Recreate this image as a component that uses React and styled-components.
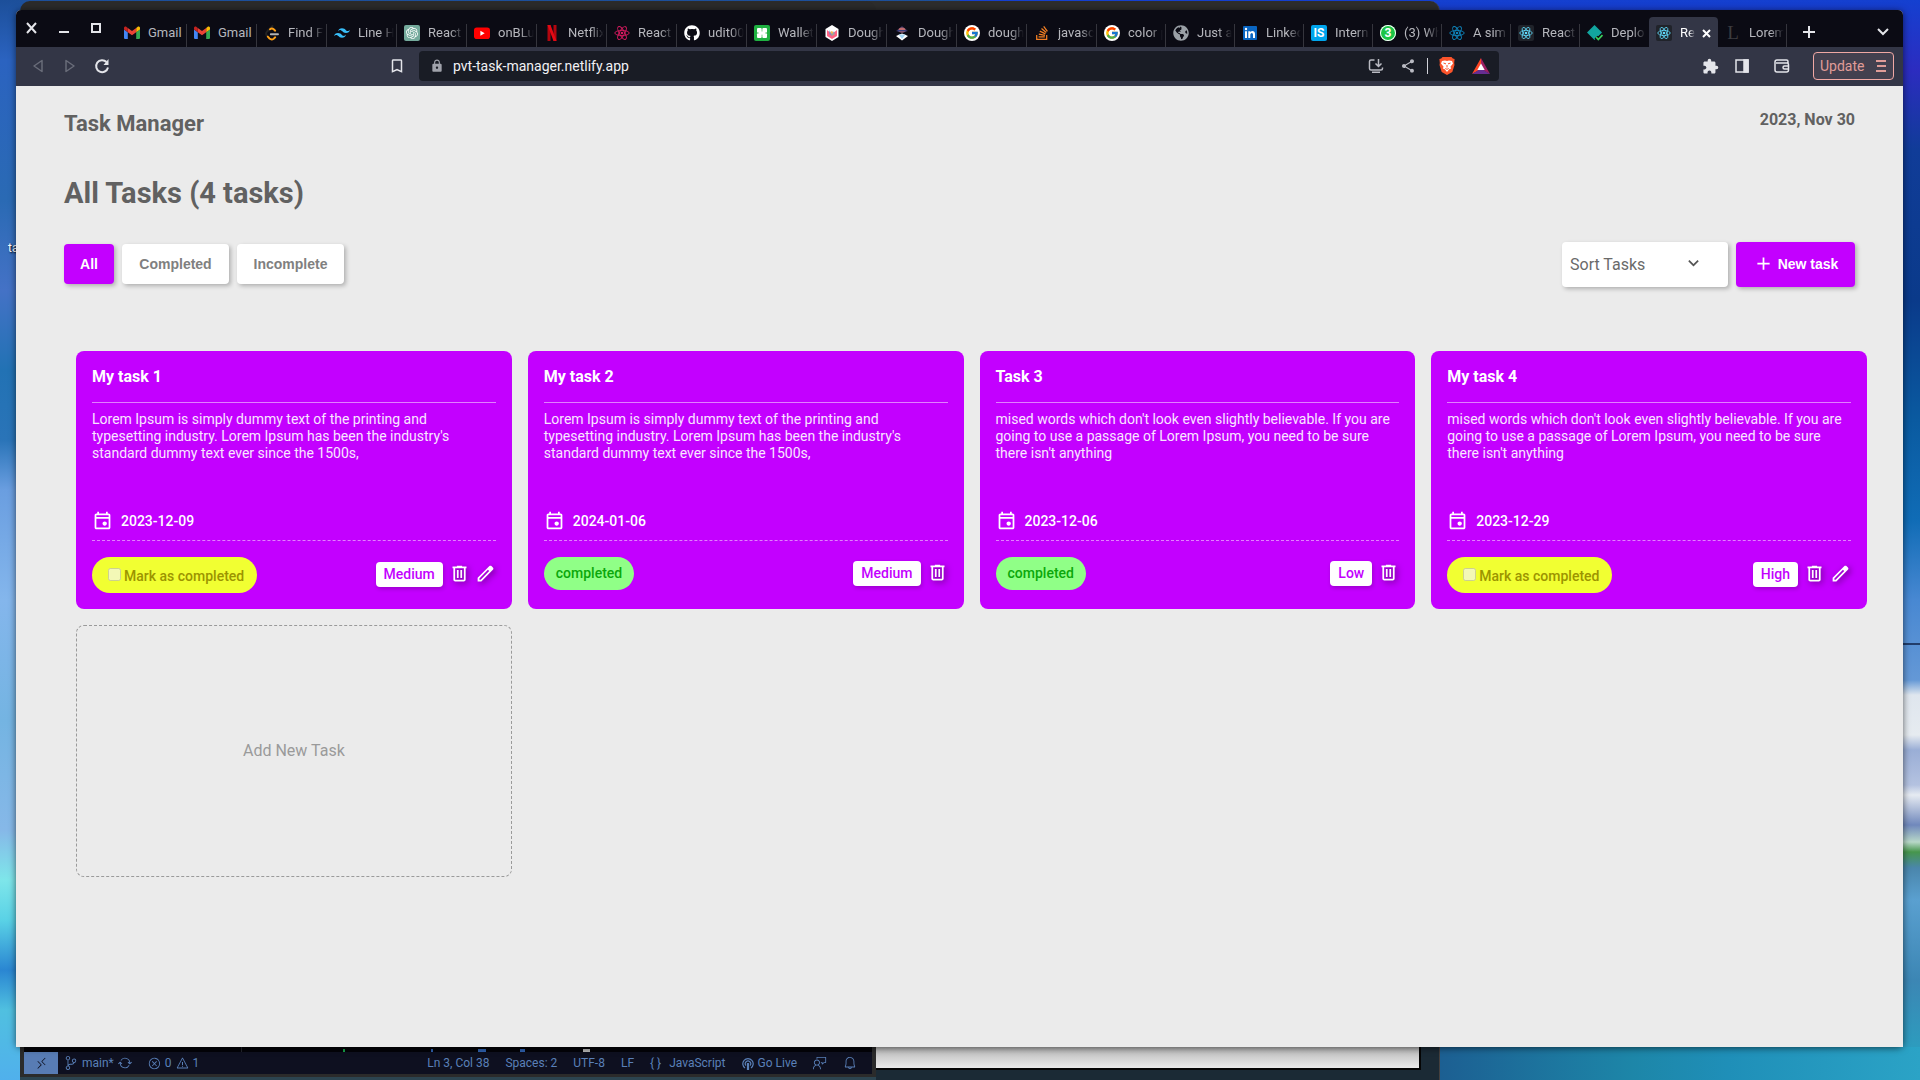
import React from "react";
import styled, { createGlobalStyle, css } from "styled-components";
import { FcGoogle } from "react-icons/fc";
import { FaGithub, FaStackOverflow, FaGlobeAmericas } from "react-icons/fa";
import { MdExtension, MdShare, MdLock, MdBookmarkBorder } from "react-icons/md";
import {
  VscRemote,
  VscSourceControl,
  VscSync,
  VscError,
  VscWarning,
  VscBell,
  VscFeedback,
} from "react-icons/vsc";
import { SiOpenai, SiTailwindcss } from "react-icons/si";

const GlobalStyle = createGlobalStyle`
  * { box-sizing: border-box; }
  body {
    margin: 0;
    font-family: Roboto, "Liberation Sans", sans-serif;
  }
  button, select, input { font: inherit; }
  h1, h2, h3, p { margin: 0; }
`;

/* ---------- desktop ---------- */

const Desktop = styled.div`
  position: relative;
  height: 100vh;
  overflow: hidden;
  background:
    linear-gradient(90deg, rgba(0, 0, 0, 0) 0 98%, rgba(20, 40, 80, 0.8) 98%) 0 643px / 100% 2px no-repeat,
    linear-gradient(90deg, #1c5f92, #1d86a8 40%, #1f8fb8 60%, #2ba3c6) right bottom / 480px 33px no-repeat,
    linear-gradient(180deg, #1440d0 0, #2c2cc0 70px, #103c98 150px, #0a3a8a 300px, #0a5aa0 420px,
      #106cb6 520px, #4888d2 600px, #6498d6 680px, #dfe6ee 695px, #e6ebf0 735px, #9aaed6 750px,
      #b4c2e0 785px, #e6ebf2 795px, #7088bc 825px, #b8d8c8 842px, #46964c 852px, #4a86ac 868px,
      #5aa0d0 900px, #3c86b4 980px, #2aa0c0 1060px) right top / 960px 100% no-repeat,
    linear-gradient(180deg, #1c4f9a 0, #2b63c0 60px, #2a6ab4 200px, #4472c6 290px, #2272b4 370px,
      #2a74b8 440px, #6a9ee0 490px, #84b6ec 600px, #74b4e2 720px, #86b8e8 830px, #7ee6ea 880px,
      #5ad2e6 920px, #2a86d2 970px, #50c0e0 1010px, #50b0ec 1080px);
`;

const DesktopLabel = styled.span`
  position: absolute;
  left: 8px;
  top: 240px;
  font-size: 12px;
  line-height: 16px;
  color: #fff;
  text-shadow: 1px 1px 2px #000;
`;

const PreviewWindow = styled.div`
  position: absolute;
  left: 500px;
  top: 1px;
  bottom: 0;
  width: 940px;
  display: flex;
  flex-direction: column;
  background: linear-gradient(180deg, #2d2d2d 0, #2d2d2d 90%, #1b2a35 96%);
  border-radius: 0 10px 0 0;
  border-right: 1px solid #45403e;
  padding: 26px 18px 10px 0;
`;

const PreviewPage = styled.div`
  flex: 1;
  background: linear-gradient(0deg, #eaeaea 0, #b4b4b4 22px);
  border-bottom: 2px solid #050505;
  border-right: 2px solid #050505;
`;

const EditorWindow = styled.div`
  position: absolute;
  left: 20px;
  top: 1px;
  bottom: 3px;
  width: 856px;
  display: flex;
  flex-direction: column;
  background: #2b2b2b;
  border-radius: 10px 10px 0 0;
  padding: 26px 4px 3px;
  box-shadow: 0 4px 0 #2c4450;
`;

const CodePane = styled.div`
  flex: 1;
  background:
    linear-gradient(#16a34a, #16a34a) 319px 100% / 2px 3px no-repeat,
    linear-gradient(#2f62b0, #2f62b0) 407px 100% / 2px 3px no-repeat,
    linear-gradient(#2f62b0, #2f62b0) 454px 100% / 8px 3px no-repeat,
    linear-gradient(#2f62b0, #2f62b0) 496px 100% / 5px 3px no-repeat,
    linear-gradient(#b8b8b8, #b8b8b8) 559px 100% / 7px 3px no-repeat,
    linear-gradient(#24262e, #24262e) 217px 100% / 1px 8px no-repeat,
    #030308;
`;

const StatusBar = styled.footer`
  display: flex;
  align-items: center;
  justify-content: space-between;
  height: 22px;
  background: #0e1020;
  color: #5a80b8;
  font-size: 12px;
  line-height: 22px;
`;

const StatusGroup = styled.div`
  display: flex;
  align-items: center;
  gap: ${(p) => p.$gap}px;
  padding-right: ${(p) => p.$end || 0}px;
`;

const StatusItem = styled.span`
  display: flex;
  align-items: center;
  gap: ${(p) => p.$gap || 4}px;
  white-space: nowrap;
`;

const RemoteBadge = styled.span`
  display: grid;
  place-items: center;
  width: 34px;
  height: 22px;
  margin-right: -10px;
  background: #587cb4;
  color: #0e1020;
`;

/* ---------- browser chrome ---------- */

const Browser = styled.div`
  position: absolute;
  inset: 10px 17px 33px 16px;
  display: flex;
  flex-direction: column;
  border-radius: 5px 5px 0 0;
  overflow: hidden;
  background: #ebebeb;
`;

const BrowserShade = styled.div`
  position: absolute;
  inset: 10px 17px 33px 16px;
  border-radius: 5px;
  box-shadow: 0 1px 7px rgba(0, 0, 0, 0.6);
`;

const TitleBar = styled.div`
  display: flex;
  align-items: stretch;
  height: 37px;
  background: #0b0b14;
  color: #e8e8ec;
`;

const WindowControls = styled.div`
  display: flex;
  width: 101px;
  height: 36px;
`;

const ChromeButton = styled.button`
  display: grid;
  place-items: center;
  width: 32px;
  height: 100%;
  padding: 0;
  margin-left: ${(p) => p.$lead || 0}px;
  border: 0;
  background: none;
  color: ${(p) => (p.$dim ? "#696c79" : "#e4e5ea")};
`;

const Tab = styled.div`
  position: relative;
  display: flex;
  align-items: center;
  gap: 8px;
  width: 70px;
  height: 30px;
  align-self: flex-end;
  padding: 2px 3px 0 7px;
  font-size: 13px;
  line-height: 16px;
  color: #b6b7bd;

  &:nth-child(n + 16) { width: 69px; }

  &::after {
    content: "";
    position: absolute;
    right: 0;
    bottom: 0;
    width: 1px;
    height: 23px;
    background: #35353d;
  }

  ${(p) =>
    p.$active &&
    css`
      background: #333646;
      border-radius: 4px 4px 0 0;
      color: #fff;
      &::after { display: none; }
    `}
  ${(p) => p.$beforeActive && css`&::after { display: none; }`}
`;

const TabIcon = styled.span`
  display: grid;
  flex: none;
  width: 16px;
  height: 16px;
  svg { width: 16px; height: 16px; }
`;

const TabText = styled.span`
  flex: 1;
  min-width: 0;
  overflow: hidden;
  white-space: nowrap;
  mask-image: ${(p) =>
    p.$fade ? `linear-gradient(90deg, #000 calc(100% - ${p.$fade}px), transparent)` : "none"};
`;

const TabClose = styled.button`
  display: grid;
  flex: none;
  width: 10px;
  margin: 0 4px 0 -2px;
  padding: 0;
  border: 0;
  background: none;
  color: #fff;
  place-items: center;
`;

const TabTools = styled.div`
  display: flex;
  flex: 1;
  justify-content: space-between;
  padding: 7px 4px 0 6px;
`;

const Toolbar = styled.div`
  display: flex;
  align-items: center;
  height: 39px;
  padding-bottom: 1px;
  background: #333646;
`;

const NavSide = styled.div`
  display: flex;
  flex: 1;
  align-items: center;
  justify-content: space-between;
  height: 32px;
  padding: 0 6px;
`;

const ToolSide = styled.div`
  display: flex;
  flex: 1;
  align-items: center;
  justify-content: flex-end;
  height: 32px;
  padding: 0 9px 0 4px;
`;

const ButtonRow = styled.div`
  display: flex;
  align-items: center;
  height: 100%;
`;

const AddressBar = styled.div`
  display: flex;
  align-items: center;
  flex: 0 1 1080px;
  height: 30px;
  padding: 0 2px 0 11px;
  background: #191c25;
  border-radius: 4px;
  color: #a0a2ab;
`;

const AddressInput = styled.input`
  flex: 1;
  min-width: 0;
  height: 30px;
  padding: 0 0 0 9px;
  border: 0;
  outline: 0;
  background: none;
  color: #f1f1f4;
  font-size: 14px;
`;

const AddressDivider = styled.span`
  width: 1px;
  height: 16px;
  margin: 0 3px;
  background: #d0d1d8;
`;

const UpdateButton = styled.button`
  display: flex;
  align-items: center;
  justify-content: space-between;
  width: 81px;
  height: 28px;
  margin-left: 15px;
  padding: 0 7px 0 6px;
  border: 1px solid #f0a8a4;
  border-radius: 4px;
  background: #43404f;
  color: #e09c98;
  font-size: 14px;
`;

/* ---------- task page ---------- */

const Page = styled.main`
  flex: 1;
  padding-top: 24px;
  background: #ebebeb;
  color: #616161;
`;

const PageHeader = styled.header`
  display: flex;
  align-items: flex-start;
  justify-content: space-between;
  padding: 0 48px;
`;

const Brand = styled.h2`
  font-size: 22px;
  line-height: 28px;
  font-weight: 700;
`;

const Today = styled.time`
  font-size: 16px;
  line-height: 19px;
  font-weight: 700;
`;

const PageTitle = styled.h1`
  padding: 38px 48px 31px;
  font-size: 29px;
  line-height: 35px;
  font-weight: 700;
`;

const Controls = styled.div`
  display: flex;
  justify-content: space-between;
  padding: 0 48px;
`;

const Filters = styled.div`
  display: flex;
  gap: 8px;
  padding-top: 2px;
`;

const FilterButton = styled.button`
  height: 40px;
  min-width: ${(p) => (p.$active ? 50 : 107)}px;
  padding: 0 16px;
  border: 0;
  border-radius: 4px;
  background: ${(p) => (p.$active ? "#c300ff" : "#fff")};
  color: ${(p) => (p.$active ? "#fff" : "#808080")};
  font-family: "Liberation Sans", sans-serif;
  font-size: 14px;
  font-weight: 700;
  box-shadow: 2px 2px 4px rgba(0, 0, 0, 0.25);
`;

const Actions = styled.div`
  display: flex;
  gap: 8px;
`;

const SortBox = styled.label`
  position: relative;
  display: block;
  svg {
    position: absolute;
    top: 11px;
    right: 24px;
    color: #555;
    pointer-events: none;
  }
`;

const SortSelect = styled.select`
  appearance: none;
  width: 166px;
  height: 45px;
  padding: 0 8px;
  border: 0;
  border-radius: 4px;
  background: #fff;
  color: #6a6a6a;
  font-size: 16px;
  box-shadow: 2px 2px 4px rgba(0, 0, 0, 0.25);
`;

const NewTaskButton = styled.button`
  display: flex;
  align-items: center;
  justify-content: center;
  gap: 4px;
  width: 119px;
  height: 45px;
  padding: 0 0 2px;
  border: 0;
  border-radius: 4px;
  background: #c300ff;
  color: #fff;
  font-family: "Liberation Sans", sans-serif;
  font-size: 14px;
  font-weight: 700;
  box-shadow: 2px 2px 4px rgba(0, 0, 0, 0.25);
`;

const TaskGrid = styled.section`
  display: grid;
  grid-template-columns: repeat(4, 1fr);
  gap: 16px;
  padding: 64px 36px 0 60px;
`;

const Card = styled.article`
  padding: 16px;
  border-radius: 8px;
  background: #c300ff;
  color: #fff;
`;

const CardTitle = styled.h3`
  padding-bottom: 16px;
  border-bottom: 1px solid rgba(255, 255, 255, 0.5);
  font-size: 16px;
  line-height: 19px;
  font-weight: 700;
`;

const CardText = styled.p`
  min-height: 107px;
  padding-top: 8px;
  font-size: 14px;
  line-height: 17px;
  color: #f9e6ff;
`;

const DueDate = styled.div`
  display: flex;
  align-items: center;
  gap: 8px;
  padding-bottom: 9px;
  border-bottom: 1px dashed rgba(255, 255, 255, 0.5);
  font-size: 14px;
  line-height: 19px;
  font-weight: 500;
  time { padding-top: 2px; }
`;

const CardFooter = styled.div`
  display: flex;
  align-items: center;
  justify-content: space-between;
  padding-top: 16px;
`;

const CardActions = styled.div`
  display: flex;
  align-items: center;
  gap: 5px;
  padding-bottom: 1px;
`;

const MarkLabel = styled.label`
  display: flex;
  align-items: center;
  gap: 3px;
  height: 36px;
  padding: 0 13px 0 16px;
  border-radius: 20px;
  background: #f1ff32;
  color: #9c9400;
  font-size: 14px;
  line-height: 16px;
  font-weight: 500;
  input {
    width: 13px;
    height: 13px;
    margin: 0 0 2px;
  }
  span { padding-top: 2px; }
`;

const DoneBadge = styled.span`
  height: 33px;
  padding: 0 12px;
  border-radius: 20px;
  background: #90ff87;
  color: #0ba80b;
  font-size: 14px;
  line-height: 32px;
  font-weight: 500;
`;

const Priority = styled.span`
  height: 25px;
  padding: 0 8px;
  margin-right: 1px;
  border-radius: 4px;
  background: #fff;
  color: #c300ff;
  font-size: 14px;
  line-height: 25px;
  font-weight: 500;
  box-shadow: 1px 2px 4px rgba(0, 0, 0, 0.2);
`;

const IconButton = styled.button`
  display: grid;
  padding: 0 0 2px;
  border: 0;
  background: none;
  color: #fff;
  filter: drop-shadow(2px 2px 3px rgba(0, 0, 0, 0.5));
`;

const AddCard = styled.button`
  height: 252px;
  padding: 0 0 2px;
  border: 1px dashed #9a9a9a;
  border-radius: 8px;
  background: none;
  color: #9a9a9a;
  font-size: 16px;
`;

/* ---------- icons ---------- */

const GLYPHS = {
  event:
    "M580-240q-42 0-71-29t-29-71q0-42 29-71t71-29q42 0 71 29t29 71q0 42-29 71t-71 29ZM200-80q-33 0-56.5-23.5T120-160v-560q0-33 23.5-56.5T200-800h40v-80h80v80h320v-80h80v80h40q33 0 56.5 23.5T840-720v560q0 33-23.5 56.5T760-80H200Zm0-80h560v-400H200v400Zm0-480h560v-80H200v80Z",
  trash:
    "M280-120q-33 0-56.5-23.5T200-200v-520h-40v-80h200v-40h240v40h200v80h-40v520q0 33-23.5 56.5T680-120H280Zm400-600H280v520h400v-520ZM360-280h80v-360h-80v360Zm160 0h80v-360h-80v360Z",
  edit:
    "M200-200h57l391-391-57-57-391 391v57Zm-80 80v-170l528-527q12-11 26.5-17t30.5-6q16 0 31 6t26 18l55 56q12 11 17.5 26t5.5 30q0 16-5.5 30.5T817-647L290-120H120Z",
  plus: "M440-440H200v-80h240v-240h80v240h240v80H520v240h-80v-240Z",
  chevron: "M480-344 240-584l56-56 184 184 184-184 56 56-240 240Z",
};

const Glyph = ({ name, size = 21 }) => (
  <svg width={size} height={size} viewBox="0 -960 960 960" fill="currentColor" aria-hidden="true">
    <path d={GLYPHS[name]} />
  </svg>
);

const GmailIcon = () => (
  <svg viewBox="0 0 16 16">
    <path d="M1 14h2.8V7.2L0 4.4v8.7c0 .5.5.9 1 .9z" fill="#4285f4" />
    <path d="M12.2 14H15c.5 0 1-.4 1-.9V4.4l-3.8 2.8z" fill="#34a853" />
    <path d="M12.2 3v4.2L16 4.4V3c0-1.200-1.500-1.900-2.500-1.100z" fill="#fbbc04" />
    <path d="M3.800 7.200V3L8 6.100 12.200 3v4.200L8 10.300z" fill="#ea4335" />
    <path d="M0 3v1.400l3.800 2.800V3l-1.300-1.100C1.500 1.100 0 1.800 0 3z" fill="#c5221f" />
  </svg>
);

const LeetcodeIcon = () => (
  <svg viewBox="0 0 16 16" fill="none" strokeWidth="1.900" strokeLinecap="round">
    <path d="M8.500 1L4 5.500" stroke="#222" />
    <path d="M4 5.500L2.800 6.800q-1.500 2 0 3.800" stroke="#222" />
    <path d="M3.800 11.600l1.700 1.900q2 1.700 4.200.2l1.500-1.400" stroke="#ffa116" />
    <path d="M6 4.300q2-1.600 3.700 0l1.500 1.400" stroke="#ffa116" />
    <path d="M6.800 9.200H14" stroke="#b3b3b3" />
  </svg>
);

const Atom = ({ color, boxed }) => (
  <svg viewBox="0 0 16 16" fill="none" stroke={color} strokeWidth={boxed ? 0.8 : 0.9}>
    {boxed && <rect width="16" height="16" rx="2" fill="#20232a" stroke="none" />}
    <circle cx="8" cy="8" r="1.300" fill={color} stroke="none" />
    <ellipse cx="8" cy="8" rx={boxed ? 6.2 : 7.2} ry="2.600" />
    <ellipse cx="8" cy="8" rx={boxed ? 6.2 : 7.2} ry="2.600" transform="rotate(60 8 8)" />
    <ellipse cx="8" cy="8" rx={boxed ? 6.2 : 7.2} ry="2.600" transform="rotate(120 8 8)" />
  </svg>
);

const GptIcon = () => (
  <svg viewBox="0 0 16 16">
    <rect width="16" height="16" rx="2" fill="#74aa9c" />
    <SiOpenai x="2" y="2" style={{ width: 12, height: 12 }} color="#fff" />
  </svg>
);

const YoutubeIcon = () => (
  <svg viewBox="0 0 16 16">
    <rect y="2.500" width="16" height="11.500" rx="2.800" fill="#f00" />
    <path d="M6.400 5.700v5l4.300-2.500z" fill="#fff" />
  </svg>
);

const NetflixIcon = () => (
  <svg viewBox="0 0 16 16">
    <path d="M3.500 0h3v16h-3zM9.500 0h3v16h-3z" fill="#b1060f" />
    <path d="M3.500 0h3l6 16h-3z" fill="#e50914" />
  </svg>
);

const WalletTabIcon = () => (
  <svg viewBox="0 0 16 16">
    <rect width="16" height="16" rx="2" fill="#1fb141" />
    <rect x="3" y="3" width="4.700" height="4.700" rx="1" fill="#fff" />
    <rect x="8.300" y="3" width="4.700" height="4.700" rx="1" fill="#fff" />
    <rect x="3" y="8.300" width="4.700" height="4.700" rx="1" fill="#fff" />
    <rect x="8.300" y="8.300" width="4.700" height="4.700" rx="1" fill="#fff" />
    <rect x="5" y="6.500" width="6" height="3" fill="#fff" />
  </svg>
);

const ChartIcon = () => (
  <svg viewBox="0 0 16 16">
    <path d="M8 0l6.500 4v8L8 16l-6.500-4V4z" fill="#fff" />
    <path d="M3 5l5 4 5-4v6l-5 3-5-3z" fill="#ff6384" />
    <path d="M6 7l2-1 3 3-3 2z" fill="#ffb84d" />
    <path d="M5 5l3 4 2-3 1 3-3 2-3-2z" fill="#4a8fe0" opacity=".55" />
  </svg>
);

const NinjaIcon = () => (
  <svg viewBox="0 0 16 16">
    <path d="M2 6l6-5 6 5-6 2z" fill="#35305c" />
    <ellipse cx="8" cy="5" rx="3.500" ry="2.500" fill="#c06a6e" />
    <path d="M4 5h8v1.500H4z" fill="#38407e" />
    <path d="M2 11l6-2.500 6 2.500-6 4.500z" fill="#fff" />
    <path d="M4.500 9.500h7L8 14z" fill="#a5d6f6" />
  </svg>
);

const LinkedinIcon = () => (
  <svg viewBox="0 0 16 16">
    <rect x="1" y="1" width="14" height="14" rx="1" fill="#0a66c2" />
    <path d="M3 6.200h2V13H3zM6.300 6.200h2V7q2.200-1.800 4-.2.700.8.700 2.200v4h-2V9.500q0-1.500-1.200-1.500T8.300 9.500V13h-2z" fill="#fff" />
    <circle cx="4" cy="4" r="1.200" fill="#fff" />
  </svg>
);

const LetterFace = styled.span`
  display: grid;
  place-items: center;
  width: 16px;
  height: 16px;
  border-radius: ${(p) => p.$radius || 2}px;
  background: ${(p) => p.$bg || "none"};
  box-shadow: ${(p) => (p.$ring ? "inset 0 0 0 1px #fff" : "none")};
  color: ${(p) => p.$color || "#fff"};
  font-family: ${(p) => (p.$serif ? '"Liberation Serif", serif' : "Roboto, sans-serif")};
  font-size: ${(p) => p.$size || 12}px;
  line-height: 16px;
  font-weight: ${(p) => (p.$serif ? 400 : 700)};
`;

const NetlifyIcon = () => (
  <svg viewBox="0 0 16 16">
    <path d="M7.500 0L15 7.500 7.500 15 0 7.500z" fill="#12a5a0" />
    <path d="M9 12l2.300 2.500L15.500 10" fill="none" stroke="#0b0b14" strokeWidth="4" />
    <path d="M9 12l2.300 2.500L15.500 10" fill="none" stroke="#3ccf5a" strokeWidth="1.800" />
  </svg>
);

const GoogleDisc = () => (
  <svg viewBox="0 0 16 16">
    <circle cx="8" cy="8" r="8" fill="#fff" />
    <FcGoogle x="1" y="1" style={{ width: 14, height: 14 }} />
  </svg>
);

const TABS = [
  { icon: <GmailIcon />, text: "Gmail", fade: 0 },
  { icon: <GmailIcon />, text: "Gmail", fade: 0 },
  { icon: <LeetcodeIcon />, text: "Find F" },
  { icon: <SiTailwindcss color="#38bdf8" />, text: "Line H" },
  { icon: <GptIcon />, text: "React" },
  { icon: <YoutubeIcon />, text: "onBLu" },
  { icon: <NetflixIcon />, text: "Netflix" },
  { icon: <Atom color="#d81b60" />, text: "React" },
  { icon: <FaGithub color="#fff" />, text: "udit00" },
  { icon: <WalletTabIcon />, text: "Wallet" },
  { icon: <ChartIcon />, text: "Dough" },
  { icon: <NinjaIcon />, text: "Dough" },
  { icon: <GoogleDisc />, text: "dough" },
  { icon: <FaStackOverflow color="#f48024" />, text: "javasc" },
  { icon: <GoogleDisc />, text: "color p" },
  { icon: <FaGlobeAmericas color="#9aa0a6" />, text: "Just a" },
  { icon: <LinkedinIcon />, text: "Linked" },
  { icon: <LetterFace $bg="#00a5ec">IS</LetterFace>, text: "Intern" },
  { icon: <LetterFace $bg="#1bc545" $radius={8} $ring>3</LetterFace>, text: "(3) Wh" },
  { icon: <Atom color="#0f86bd" />, text: "A sim" },
  { icon: <Atom color="#61dafb" boxed />, text: "React" },
  { icon: <NetlifyIcon />, text: "Deplo" },
  { icon: <Atom color="#61dafb" boxed />, text: "Re", active: true, fade: 6 },
  { icon: <LetterFace $serif $color="#3c3c40" $size={19}>L</LetterFace>, text: "Lorem" },
];

const line = { fill: "none", stroke: "currentColor" };

function TabStrip() {
  return (
    <TitleBar>
      <WindowControls>
        <ChromeButton aria-label="Close window">
          <svg width="32" height="36" {...line} strokeWidth="2">
            <path d="M11 13l9 10M20 13l-9 10" />
          </svg>
        </ChromeButton>
        <ChromeButton aria-label="Minimize">
          <svg width="32" height="36" {...line} strokeWidth="2">
            <path d="M11 22h10" />
          </svg>
        </ChromeButton>
        <ChromeButton aria-label="Maximize">
          <svg width="32" height="36" {...line} strokeWidth="2">
            <path d="M12 14h8v8h-8z" />
          </svg>
        </ChromeButton>
      </WindowControls>
      {TABS.map((tab, i) => (
        <Tab key={i} $active={tab.active} $beforeActive={TABS[i + 1]?.active}>
          <TabIcon>{tab.icon}</TabIcon>
          <TabText $fade={tab.fade ?? 14}>{tab.text}</TabText>
          {tab.active && (
            <TabClose aria-label="Close tab">
              <svg width="9" height="9" {...line} strokeWidth="2">
                <path d="M1 1l7 7M8 1L1 8" />
              </svg>
            </TabClose>
          )}
        </Tab>
      ))}
      <TabTools>
        <ChromeButton aria-label="New tab">
          <svg width="12" height="12" {...line} strokeWidth="2">
            <path d="M6 0v12M0 6h12" />
          </svg>
        </ChromeButton>
        <ChromeButton aria-label="Search tabs">
          <svg width="12" height="8" {...line} strokeWidth="2">
            <path d="M1 1l5 5 5-5" />
          </svg>
        </ChromeButton>
      </TabTools>
    </TitleBar>
  );
}

function AddressRow() {
  return (
    <Toolbar>
      <NavSide>
        <ButtonRow>
          <ChromeButton $dim aria-label="Back">
            <svg width="12" height="14" {...line} strokeWidth="1.500" strokeLinejoin="round">
              <path d="M10 1.500v11L2 7z" />
            </svg>
          </ChromeButton>
          <ChromeButton $dim aria-label="Forward">
            <svg width="12" height="14" {...line} strokeWidth="1.500" strokeLinejoin="round">
              <path d="M2 1.500v11L10 7z" />
            </svg>
          </ChromeButton>
          <ChromeButton aria-label="Reload">
            <svg width="16" height="16" {...line} strokeWidth="2">
              <path d="M12.500 4A6 6 0 1 0 14 9.500" />
              <path d="M14.500 1v6h-5z" fill="currentColor" stroke="none" />
            </svg>
          </ChromeButton>
        </ButtonRow>
        <ChromeButton aria-label="Bookmark">
          <MdBookmarkBorder size={18} />
        </ChromeButton>
      </NavSide>
      <AddressBar>
        <MdLock size={14} />
        <AddressInput aria-label="Address" defaultValue="pvt-task-manager.netlify.app" />
        <ChromeButton aria-label="Install app">
          <svg width="16" height="16" {...line} strokeWidth="1.500" stroke="#b9bac2">
            <path d="M6.500 2H3Q1.500 2 1.500 3.500v7Q1.500 12 3 12h10q1.500 0 1.500-1.500V9.500M4 14.200h8M10.500 1v7M7.500 5.500l3 3 3-3" />
          </svg>
        </ChromeButton>
        <ChromeButton aria-label="Share">
          <MdShare size={16} color="#b9bac2" />
        </ChromeButton>
        <AddressDivider />
        <ChromeButton aria-label="Shields">
          <svg width="16" height="18" viewBox="0 0 16 18">
            <path d="M3.500 0h9l1.300 1.600 1.800.4-.4 4 .3 2-2.200 7L8 18l-5.300-3L.5 8l.3-2-.4-4 1.800-.4z" fill="#fb542b" />
            <path d="M3 4l3-.6 2 .5 2-.5 3 .6 1 2.500-2.600 3.200.8 1.800-2 .8L8 15l-2.200-2.700-2-.8.8-1.800L2 6.500z" fill="#fff" />
            <path d="M4.500 6l2.500.9M11.500 6L9 6.900M8 8v2.500M6.300 11.500L8 12.300l1.700-.8" fill="none" stroke="#fb542b" strokeWidth="1" />
          </svg>
        </ChromeButton>
        <ChromeButton $lead={2} aria-label="Rewards">
          <svg width="18" height="16" viewBox="0 0 18 16">
            <path d="M9 0L0 16l9-5z" fill="#ff4724" />
            <path d="M9 0l9 16-9-5z" fill="#9e1f63" />
            <path d="M0 16h18l-9-5.500z" fill="#662d91" />
            <path d="M9 5.500l3.700 6.500H5.300z" fill="#fff" />
          </svg>
        </ChromeButton>
      </AddressBar>
      <ToolSide>
        <ChromeButton aria-label="Extensions">
          <MdExtension size={17} />
        </ChromeButton>
        <ChromeButton aria-label="Side panel">
          <svg width="14" height="14" {...line} strokeWidth="1.500">
            <rect x="1" y="1" width="12" height="12" />
            <path d="M9 1h4v12H9z" fill="currentColor" />
          </svg>
        </ChromeButton>
        <ChromeButton $lead={8} aria-label="Wallet">
          <svg width="16" height="14" {...line} strokeWidth="1.500">
            <path d="M14 4V2.500Q14 1 12.500 1H3Q1 1 1 3v8q0 2 2 2h9.500q2 0 2-2V6Q14.500 4 13 4H2" />
            <path d="M15 7h-4.500q-1.500 0-1.500 1.500t1.500 1.500H15" />
          </svg>
        </ChromeButton>
        <UpdateButton>
          Update
          <svg width="10" height="12" {...line} strokeWidth="2">
            <path d="M0 1h10M1 6h9M0 11h10" />
          </svg>
        </UpdateButton>
      </ToolSide>
    </Toolbar>
  );
}

/* ---------- tasks ---------- */

const LOREM =
  "Lorem Ipsum is simply dummy text of the printing and typesetting industry. Lorem Ipsum has been the industry's standard dummy text ever since the 1500s,";
const MISED =
  "mised words which don't look even slightly believable. If you are going to use a passage of Lorem Ipsum, you need to be sure there isn't anything";

const TASKS = [
  { title: "My task 1", text: LOREM, due: "2023-12-09", priority: "Medium", done: false },
  { title: "My task 2", text: LOREM, due: "2024-01-06", priority: "Medium", done: true },
  { title: "Task 3", text: MISED, due: "2023-12-06", priority: "Low", done: true },
  { title: "My task 4", text: MISED, due: "2023-12-29", priority: "High", done: false },
];

function TaskCard({ task }) {
  return (
    <Card>
      <CardTitle>{task.title}</CardTitle>
      <CardText>{task.text}</CardText>
      <DueDate>
        <Glyph name="event" />
        <time dateTime={task.due}>{task.due}</time>
      </DueDate>
      <CardFooter>
        {task.done ? (
          <DoneBadge>completed</DoneBadge>
        ) : (
          <MarkLabel>
            <input type="checkbox" disabled />
            <span>Mark as completed</span>
          </MarkLabel>
        )}
        <CardActions>
          <Priority>{task.priority}</Priority>
          <IconButton aria-label="Delete task">
            <Glyph name="trash" />
          </IconButton>
          {!task.done && (
            <IconButton aria-label="Edit task">
              <Glyph name="edit" />
            </IconButton>
          )}
        </CardActions>
      </CardFooter>
    </Card>
  );
}

function TaskPage() {
  return (
    <Page>
      <PageHeader>
        <Brand>Task Manager</Brand>
        <Today dateTime="2023-11-30">2023, Nov 30</Today>
      </PageHeader>
      <PageTitle>All Tasks (4 tasks)</PageTitle>
      <Controls>
        <Filters>
          <FilterButton $active>All</FilterButton>
          <FilterButton>Completed</FilterButton>
          <FilterButton>Incomplete</FilterButton>
        </Filters>
        <Actions>
          <SortBox>
            <SortSelect aria-label="Sort Tasks">
              <option>Sort Tasks</option>
            </SortSelect>
            <Glyph name="chevron" />
          </SortBox>
          <NewTaskButton>
            <Glyph name="plus" />
            New task
          </NewTaskButton>
        </Actions>
      </Controls>
      <TaskGrid>
        {TASKS.map((task) => (
          <TaskCard key={task.title} task={task} />
        ))}
        <AddCard>Add New Task</AddCard>
      </TaskGrid>
    </Page>
  );
}

function EditorStatus() {
  return (
    <StatusBar>
      <StatusGroup $gap={16}>
        <RemoteBadge>
          <VscRemote size={13} />
        </RemoteBadge>
        <StatusItem>
          <VscSourceControl size={14} />
          main*
          <VscSync size={14} />
        </StatusItem>
        <StatusItem>
          <VscError size={13} />
          0
          <VscWarning size={13} />
          1
        </StatusItem>
      </StatusGroup>
      <StatusGroup $gap={16} $end={15}>
        <StatusItem>Ln 3, Col 38</StatusItem>
        <StatusItem>Spaces: 2</StatusItem>
        <StatusItem>UTF-8</StatusItem>
        <StatusItem>LF</StatusItem>
        <StatusItem $gap={8}>
          <span>{"{ }"}</span>
          <span>JavaScript</span>
        </StatusItem>
        <StatusItem>
          <svg width="12" height="13" {...line} strokeWidth="1.200">
            <path d="M3 11A5.200 5.200 0 1 1 9 11M4 8.500a2.700 2.700 0 1 1 4 0" />
            <path d="M6 6v7" strokeWidth="2.200" />
          </svg>
          Go Live
        </StatusItem>
        <StatusItem>
          <VscFeedback size={14} />
        </StatusItem>
        <StatusItem>
          <VscBell size={14} />
        </StatusItem>
      </StatusGroup>
    </StatusBar>
  );
}

export default function App() {
  return (
    <>
      <GlobalStyle />
      <Desktop>
        <DesktopLabel>ta</DesktopLabel>
        <PreviewWindow>
          <PreviewPage />
        </PreviewWindow>
        <EditorWindow>
          <CodePane />
          <EditorStatus />
        </EditorWindow>
        <BrowserShade />
        <Browser>
          <TabStrip />
          <AddressRow />
          <TaskPage />
        </Browser>
      </Desktop>
    </>
  );
}
